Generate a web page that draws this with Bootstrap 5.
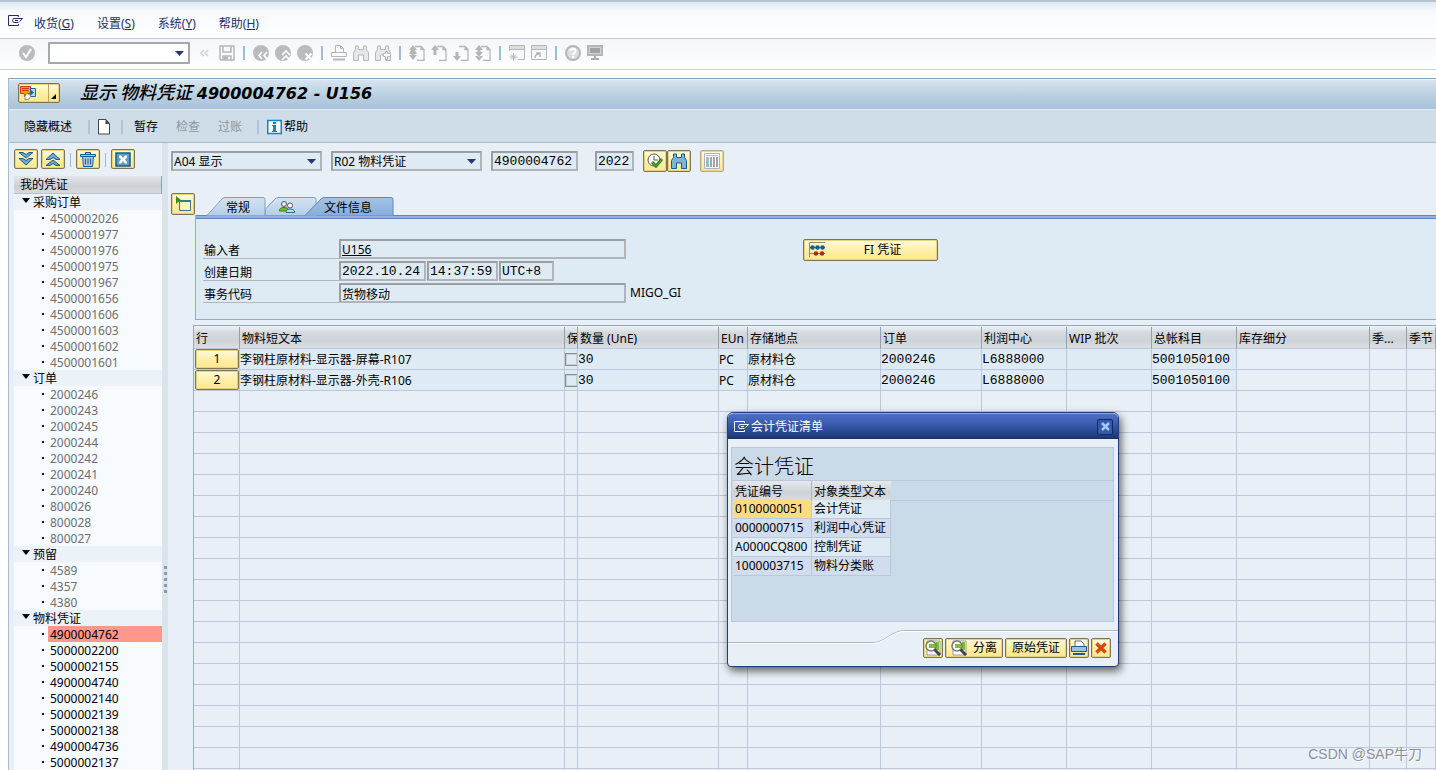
<!DOCTYPE html>
<html lang="zh-CN">
<head>
<meta charset="utf-8">
<meta name="viewport" content="width=device-width, initial-scale=1">
<title>显示 物料凭证 4900004762 - U156</title>
<link href="https://cdn.jsdelivr.net/npm/bootstrap@5.3.0/dist/css/bootstrap.min.css" rel="stylesheet">
<style>
:root{--ui:"Noto Sans","Noto Sans CJK SC",sans-serif;--line:#bcc8d9;--frame:#8facc8}
body{font-family:var(--ui);font-size:12px;line-height:16px;color:#000;background:#fff;height:100vh;overflow:hidden}
a{color:inherit;text-decoration:none}
svg{display:block;flex:none}
button{font:inherit;color:inherit;background:none;border:0;padding:0}
.menubar{height:39px;flex:none;border-top:2px solid #b5c3d3;border-bottom:1px solid #c3ccd8;background:linear-gradient(#dfe8f2,#f7f9fc 25%,#fff);color:#1d2f66;padding:6px 8px 0}
.menubar .menus{gap:23px;margin-left:11px}
.menubar svg{margin-top:7px}
.stdbar{height:31px;flex:none;background:linear-gradient(#f3f6fa,#fff);border-bottom:1px solid #c9d0d8;padding-left:19px;gap:6px;color:#b4b6b8;padding-bottom:2px}
.stdbar .sep,.appbar .sep{width:2px;height:14px;background:#9dbcdb;margin:0 2px}
.cmdbox{width:142px;height:22px;border:2px solid #a4a8ac;margin-left:7px;border-radius:1px}
.expander{width:17px}
.drop{appearance:none;font:inherit;background:#fff url("data:image/svg+xml,%3Csvg xmlns='http://www.w3.org/2000/svg' width='9' height='5'%3E%3Cpath d='M0 0h9L4.500 5z' fill='%23203a70'/%3E%3C/svg%3E") no-repeat right 4px center}
.workarea{margin:8px 0 0 8px;border-top:1px solid #87a3bc;border-left:1px solid #a8bccd;background:#e8eff6}
.titlebar{height:30px;flex:none;background:linear-gradient(#d6e4f0,#b9cfdf 55%,#a9c2dc);border-top:1px solid #edf4f9;padding-left:9px;padding-bottom:4px}
.titlebar h1{font-size:18px;font-style:italic;font-weight:700;line-height:22px;margin:0 0 0 20px}
.titlebar h1 span{font-family:"DejaVu Sans",sans-serif;font-size:16px}
.titlebar h1 .cjk{font-family:"Noto Sans CJK SC",sans-serif;font-size:18px;font-weight:500}
.appbar{height:34px;flex:none;background:#cfdde8;border-bottom:1px solid #a4bacb;border-top:1px solid #e4edf3;padding:1px 0 0 15px}
.appbar .sep{margin:0;background:#aac6df}
.appbar button:disabled{color:#8b969f}
.appbar .newdoc{margin:0 11px 0 8px}
.appbar .cmd{margin-right:18px}
.appbar .first{margin-left:11px}
.appbar .final{margin-right:15px}
.ybtn{display:flex;align-items:center;justify-content:center;border:1px solid #7d7355;border-radius:2px;background:linear-gradient(#fffbe0,#ffefa8 50%,#fbe890);box-shadow:inset 0 0 0 1px #e9d27c;height:20px;width:24px}
.ybtn.b22{height:22px}
.ybtn.svcbtn{width:42px}
.ybtn.fibtn{width:135px}
.ybtn.w20{width:20px}
.ybtn.w58{width:58px;gap:6px}
.ybtn.w62{width:62px}
.ybtn:disabled{border-color:#a69d80;opacity:.85}
.side{width:153px;flex:none;padding:6px 0 0 5px;height:100%}
.side .tools{height:27px;gap:3px}
.side .tools i{width:1px;height:14px;background:#a9b3bd;margin:0 2px}
.treehead{height:18px;padding:1px 0 0 6px;background:linear-gradient(#e3e6e9,#ccd0d5 60%,#d6d9dd);border-right:1px solid #8fa0b0;border-bottom:1px solid #b9c0c8}
.tree,.tree ul{list-style:none;margin:0;padding:0}
.tree>li{background:#ecf2fa}
.tree .grp{display:flex;align-items:center;padding-left:8px;height:16px;gap:3px;padding-top:2px}
.tree .grp::before{content:"";border:4px solid transparent;border-top:5px solid #000;border-bottom:0;margin-bottom:5px;width:0}
.tree ul li{background:#f7fbff;height:16px;display:flex;align-items:center;padding-left:28px;color:#6e6e6e}
.tree ul li::before{content:"";width:2px;height:2px;background:#000;margin-right:4px}
.tree ul li a{flex:1;height:16px;line-height:18px;padding-left:2px}
.tree ul.recent li{color:#000}
.tree ul li a.hit{background:#ff978b}
.splitter{width:6px;flex:none;background:#dae5eb}
.splitter i{width:3px;height:3px;background:#8d99a8;margin-bottom:3px}
.splitter div{margin-top:248px}
.field{height:20px;border:2px solid #b0b5b9;border-top-color:#9a9fa3;border-left-color:#9a9fa3;background-color:#deebf5;padding:1px 1px 0;border-radius:1px;color:#000;font-size:12px;font-family:inherit;outline:0}
.mono{font-family:"Liberation Mono","Noto Sans CJK SC",monospace;font-size:13px}
.w-sel{width:151px}.w-num{width:87px}.w-year{width:39px}.w-long{width:287px}.w-time{width:71px}.w-zone{width:55px}
.main{flex:1;min-width:0;padding:7px 0 0 3px}
.selrow{height:22px;gap:9px}
.tabrow{height:43px;gap:12px}
.tabs{position:relative;height:18px}
.tabs svg.shape{position:absolute;left:0;top:0}
.tabs button{position:relative;height:18px;padding-top:3px}
.tabs .t-gen{width:58px;padding-left:4px}
.tabs .t-part{width:44px}
.tabs .t-doc{width:78px}
.infopanel{background:#deebf5;border:1px solid var(--frame);border-right:0;border-top:0;height:105px;margin-left:24px}
.infopanel .rail{height:4px;background:#8fb2dc;border-top:1px solid #5d88ba;border-bottom:1px solid #5d88ba}
.infopanel .formarea{padding:20px 0 0 7px}
.formcol{width:600px}
.formrow{height:20px;margin-bottom:2px}
.formrow label{width:136px;height:20px;border-bottom:1px solid #b3b7ba;padding:4px 0 0 1px;line-height:15px}
.fibtn span{width:108px}
.gridwrap{margin:5px 0 0 22px;border-top:1px solid var(--frame);border-left:1px solid var(--frame);padding-top:1px;overflow:hidden;flex:1}
.items{table-layout:fixed;border-collapse:separate;border-spacing:0;width:100%}
.items th{font-weight:400;height:22px;padding:2px 1px 0 2px;background:linear-gradient(#eceff2,#d6dade 25%,#ced3d9 65%,#dcdfe2);border-right:1px solid #8fa0b0;border-bottom:1px solid var(--line);overflow:hidden;white-space:nowrap}
.items td{height:21px;padding:1px 0 0;border-right:1px solid var(--line);border-bottom:1px solid var(--line);overflow:hidden;white-space:nowrap}
.items td:first-child{padding:0 0 0 1px}
.items .filled td:nth-child(-n+10){background:#deebf5}
.items .ybtn{width:44px;height:20px}
.items input{appearance:none;display:block;width:13px;height:13px;border:1px solid #8c8f92;box-shadow:inset 0 0 0 1px #c6cfd6;margin:0}
.dlg{position:absolute;left:727px;top:412px;width:392px;border:1px solid #213c78;border-radius:6px 6px 4px 4px;background:#e8eff6;box-shadow:2px 4px 8px rgba(0,0,0,.6)}
.dlg header{height:26px;border-radius:5px 5px 0 0;background:linear-gradient(#4c70c6,#3a5db0 40%,#1d3777);border-top:1px solid #88a5e2;border-bottom:1px solid #17305f;color:#fff;padding:1px 5px 0 6px;gap:2px}
.dlg .closer{width:16px;height:16px;border:1px solid #122b66;border-radius:2px;background:#3559ac;display:flex;align-items:center;justify-content:center}
.listbox{margin:8px 4px 0 3px;background:#cbdae8;border:1px solid #b9c6d6;height:175px}
.listbox h2{font-family:"Noto Sans CJK SC",sans-serif;font-size:20px;font-weight:300;line-height:32px;height:33px;margin:0;padding:2px 0 0 2px;border-bottom:1px solid var(--line)}
.headband{border-bottom:1px solid var(--line);height:20px}
.hits{border-collapse:separate;border-spacing:0;table-layout:fixed;width:158px;margin-left:1px}
.hits col{width:79px}
.hits th{font-weight:400;height:19px;padding:3px 0 0 2px;line-height:16px;background:linear-gradient(#e6e9ec,#ced2d7 60%,#d9dcdf);border-right:1px solid #aab4bf}
.hits td{height:19px;padding:0 0 0 2px;line-height:16px;border-right:1px solid var(--line);border-bottom:1px solid var(--line);background:#deebf5;white-space:nowrap}
.hits tr:nth-child(even) td{background:#d1dcee}
.hits td.cur{background:#fcdc80}
.hits th:last-child{border-right:0}
.dlg footer{padding:0 7px 8px 0;gap:2px;margin-top:-6px}
.mark-csdn{position:absolute;right:14px;bottom:7px;font-family:"Liberation Sans","Noto Sans CJK SC",sans-serif;font-size:14px;line-height:18px;color:#8b9095;text-shadow:1px 1px 0 #fff}
</style>
</head>
<body class="d-flex flex-column position-relative">

<svg width="0" height="0" class="position-absolute" aria-hidden="true"><defs>
<g id="i-exit" fill="none" stroke="currentColor"><path d="M10.500 2V.5H.5v10h10V9"/><path d="M10 3.500H5.500q-2 2 0 4h5M7 5.500h3M10 3.500h4.500l-3 3"/></g>
<g id="i-page" fill="none" stroke="currentColor" stroke-width="1.300"><path d="M6 1.500h6l3 3v11H8M12 1.500v3h3"/></g>
<g id="i-bino"><path d="M2.500 1h3v3.500h5V1h3v3.500l2 3v8h-5V10h-5v5.500h-5v-8l2-3z"/></g>
<g id="i-find"><path d="M2 1h13v14H2z" fill="#fff" stroke="#999"/><path d="M11 2h3v8h-3z" fill="#7cc22c"/><circle cx="6" cy="6" r="5" fill="#fff" stroke="#777" stroke-width="1.500"/><path d="M4 4h6v4H4z" fill="#7cc22c"/><path d="M9.500 9.500l5.500 5.500" stroke="#444" stroke-width="3"/></g>
</defs></svg>

<nav class="menubar d-flex align-items-start" aria-label="菜单">
  <svg width="15" height="12"><use href="#i-exit"/></svg>
  <div class="menus d-flex mt-2">
    <a href="#">收货(<u>G</u>)</a><a href="#">设置(<u>S</u>)</a><a href="#">系统(<u>Y</u>)</a><a href="#">帮助(<u>H</u>)</a>
  </div>
</nav>

<div class="stdbar d-flex align-items-center">
  <button aria-label="确认"><svg width="16" height="16"><circle cx="8" cy="8" r="8" fill="#b9bbbd"/><path d="M4 8l3 4 5-8" fill="none" stroke="#fff" stroke-width="2"/></svg></button>
  <select class="cmdbox drop" aria-label="命令"><option></option></select>
  <button class="expander" aria-label="隐藏"><svg width="17" height="16" fill="none" stroke="#cfd1d3" stroke-width="1.500"><path d="M8 5L5 8l3 3M12 5L9 8l3 3"/></svg></button>
  <button aria-label="保存"><svg width="16" height="16" fill="none" stroke="currentColor" stroke-width="1.500"><path d="M1 1h14v14H2l-1-1zM4 1v6h8V1M4 15v-4h8v4"/><path d="M5 13h4" stroke-width="3"/></svg></button>
  <span class="sep"></span>
  <button aria-label="返回"><svg width="16" height="16"><circle cx="8" cy="8" r="8" fill="#b9bbbd"/><path d="M9 7l-3 3.500L9 14M14 7l-3 3.500 3 3.500" fill="none" stroke="#fff" stroke-width="1.700"/></svg></button>
  <button aria-label="退出"><svg width="16" height="16"><circle cx="8" cy="8" r="8" fill="#b9bbbd"/><path d="M7 10l4-4 4 4M7 15l4-4 4 4" fill="none" stroke="#fff" stroke-width="1.700"/></svg></button>
  <button aria-label="取消"><svg width="16" height="16"><circle cx="8" cy="8" r="8" fill="#b9bbbd"/><path d="M8.500 8.500l6 6M14.500 8.500l-6 6" fill="none" stroke="#fff" stroke-width="2"/></svg></button>
  <span class="sep"></span>
  <button aria-label="打印"><svg width="16" height="16" fill="none" stroke="currentColor"><path d="M4.500 7V.5h5l3 3V7M9.500.5v3h3M.5 7.500h15v4H.5z"/><path d="M2 14.500h12" stroke-width="2"/></svg></button>
  <button aria-label="查找"><svg width="16" height="16" fill="#e6e7e8" stroke="currentColor"><use href="#i-bino"/></svg></button>
  <button aria-label="查找下一个"><svg width="16" height="16" fill="#e6e7e8" stroke="currentColor"><use href="#i-bino"/><path d="M10.500 6.500h2v2h3v3h-3v3h-2v-3h-2v-3h2z" fill="#fff"/></svg></button>
  <span class="sep"></span>
  <button aria-label="首页"><svg width="16" height="16"><use href="#i-page"/><path d="M4 0l4 5H6l2 4H5.500v1H8l-4 5-4-5h2.500V9H0l2-4H0z" fill="currentColor"/></svg></button>
  <button aria-label="上页"><svg width="16" height="16"><use href="#i-page"/><path d="M4 0l4 5H5.500v5h-3V5H0z" fill="currentColor"/></svg></button>
  <button aria-label="下页"><svg width="16" height="16"><use href="#i-page"/><path d="M4 16l4-5H5.500V7h-3v4H0z" fill="currentColor"/></svg></button>
  <button aria-label="末页"><svg width="16" height="16"><use href="#i-page"/><path d="M4 0l4 5H5.500v2H8l-4 5-4-5h2.500V5H0zM4 16l4-5H0z" fill="currentColor"/></svg></button>
  <span class="sep"></span>
  <button aria-label="新会话"><svg width="16" height="16" fill="none" stroke="currentColor"><path d="M.5 6V.5h15v14H9M.5 4.500h15"/><path d="M1 2.500h14" stroke="#dcdddf" stroke-width="3"/><path d="M4.500 8v8M.5 12h8M2 9.500l5 5M7 9.500l-5 5"/></svg></button>
  <button aria-label="快捷方式"><svg width="16" height="16" fill="none" stroke="currentColor"><path d="M.5.5h15v14H.5zM.5 4.500h15"/><path d="M1 2.500h14" stroke="#dcdddf" stroke-width="3"/><path d="M4 13c0-3 1-4 4-4M5 8h4v4" stroke-width="1.500"/></svg></button>
  <span class="sep"></span>
  <button aria-label="帮助"><svg width="16" height="16"><circle cx="8" cy="8" r="7" fill="#dcdddf" stroke="#b4b6b8" stroke-width="2"/><path d="M5.500 6c0-3 5-3 5 0 0 2-2.500 2-2.500 4M8 11v2" fill="none" stroke="#fff" stroke-width="2"/></svg></button>
  <button aria-label="布局"><svg width="16" height="16"><path d="M1 1h14v9H1z" fill="#d2d3d5" stroke="#b4b6b8" stroke-width="2"/><path d="M3 3h10v5H3z" fill="#a0a2a4"/><path d="M7 11h2v2H7zM4 13h8v2H4z" fill="#a9abad"/></svg></button>
</div>

<div class="workarea flex-grow-1 d-flex flex-column overflow-hidden">
  <div class="titlebar d-flex align-items-center">
    <button class="ybtn svcbtn justify-content-between" aria-label="对象服务"><svg width="18" height="16"><path d="M1.500 1.500h10v7H8l-2 3-1-3H1.500z" fill="#ff9d0a" stroke="#c83c10"/><path d="M3 3.500h7M3 5.500h7" stroke="#c83c10"/><path d="M11.500 3.500h5v8h-5z" fill="#b8d8ee" stroke="#1a6696"/><path d="M12 5l3 2.500-3 2.500z" fill="#1a6696"/><path d="M6 11l2-3 4 3-2 3-4 1z" fill="#fff" stroke="#666" stroke-width=".7"/></svg><svg width="11" height="18"><path d="M.5 0v18" stroke="#b9a560"/><path d="M8 10v5H3z"/></svg></button>
    <h1><span class="cjk">显示 物料凭证</span> <span>4900004762 - U156</span></h1>
  </div>
  <div class="appbar d-flex align-items-center">
    <button>隐藏概述</button><span class="sep ms-3"></span>
    <button class="newdoc" aria-label="新建"><svg width="12" height="16"><path d="M.5.500H8l3.500 4v10.500H.5z" fill="#fff" stroke="#444"/><path d="M7.500 0v5H12z" fill="#444"/></svg></button><span class="sep"></span>
    <button class="cmd first">暂存</button><button class="cmd" disabled>检查</button><button class="final" disabled>过账</button><span class="sep me-2"></span>
    <button class="d-flex align-items-center"><svg width="17" height="16"><path d="M.75 1.500h13.500v13H.75z" fill="#fff" stroke="#1383c6" stroke-width="1.500"/><path d="M6 3h3v2H6zM5 6h4v6h1v1H5v-1h1V7H5z" fill="#1383c6"/></svg>帮助</button>
  </div>

  <div class="d-flex flex-grow-1 overflow-hidden">
    <aside class="side">
      <div class="tools d-flex align-items-start">
        <button class="ybtn" aria-label="全部展开"><svg width="16" height="16" fill="#6fa8d0" stroke="#175c8f"><path d="M1 1.500h4l3 2 3-2h4L8 7zM1 7.500h4l3 2 3-2h4L8 14z"/></svg></button>
        <button class="ybtn" aria-label="全部折叠"><svg width="16" height="16" fill="#6fa8d0" stroke="#175c8f"><path d="M1 8.500h4l3-2 3 2h4L8 2zM1 14.500h4l3-2 3 2h4L8 9z"/></svg></button>
        <i class="align-self-start mt-1"></i>
        <button class="ybtn" aria-label="删除"><svg width="18" height="16" fill="#a9cbe4" stroke="#175c8f"><path d="M3.500 5.500h11l-1 10h-9zM1.500 3.500h15v2h-15zM6.500 3.500v-2h5v2"/><path d="M6.500 7.500v6M9 7.500v6M11.500 7.500v6"/></svg></button>
        <i class="align-self-start mt-1"></i>
        <button class="ybtn" aria-label="关闭"><svg width="16" height="15"><path d="M1 1h14v13H1z" fill="#5f9cc8" stroke="#175c8f" stroke-width="1.500"/><path d="M4 3.500h2l2 2.500 2-2.500h2v2L10 7.500l2 2.500v1.500h-2L8 9l-2 2.500H4V10l2-2.500-2-2z" fill="#fff"/></svg></button>
      </div>
      <div class="treehead">我的凭证</div>
      <ul class="tree" id="tree"></ul>
    </aside>
    <div class="splitter d-flex flex-column align-items-center justify-content-center"><div><i class="d-block"></i><i class="d-block"></i><i class="d-block"></i><i class="d-block"></i><i class="d-block"></i></div></div>

    <main class="main d-flex flex-column">
      <div class="selrow d-flex align-items-center">
        <select class="field drop w-sel" aria-label="操作"><option>A04 显示</option></select>
        <select class="field drop w-sel" aria-label="参考凭证"><option>R02 物料凭证</option></select>
        <input class="field mono w-num" value="4900004762" aria-label="凭证号" readonly>
        <input class="field mono w-year ms-2" value="2022" aria-label="年度" readonly>
        <div class="d-flex">
        <button class="ybtn b22" aria-label="执行"><svg width="17" height="16"><circle cx="7" cy="7" r="6" fill="#fff" stroke="#555"/><path d="M7 3v4h4" fill="none" stroke="#555"/><path d="M5 9l4 4 6-7" fill="none" stroke="#2c7c14" stroke-width="3"/><path d="M5 9l4 4 6-7" fill="none" stroke="#6cc03a"/></svg></button>
        <button class="ybtn b22" aria-label="查找凭证"><svg width="16" height="16" fill="#7fb4da" stroke="#175c8f"><use href="#i-bino"/></svg></button>
        </div>
        <button class="ybtn b22" disabled aria-label="列"><svg width="16" height="16"><path d="M.5.500h15v15H.5z" fill="#fff" stroke="#aaa"/><path d="M2 2.500h12" stroke="#bbb"/><path d="M2 4h3v10H2z" fill="#8eb4cc"/><path d="M6 4h2v10H6zM9 4h2v10H9zM12 4h2v10h-2z" fill="#999"/></svg></button>
      </div>

      <div class="tabrow d-flex align-items-end">
        <button class="ybtn b22" aria-label="显示明细"><svg width="16" height="16"><path d="M4.500 4.500h11v10h-11z" fill="#fff3b8" stroke="#3d7598"/><path d="M4 5h12" stroke="#3d7598" stroke-width="2"/><path d="M1 0l5 4-5 4z" fill="#3c8f1c"/></svg></button>
        <div class="tabs d-flex">
          <svg class="shape" width="188" height="19"><defs><linearGradient id="tg" x2="0" y2="1"><stop stop-color="#d3e2f0"/><stop offset="1" stop-color="#b4cfe8"/></linearGradient><linearGradient id="ta" x2="0" y2="1"><stop stop-color="#a3c3e4"/><stop offset="1" stop-color="#87addb"/></linearGradient></defs><path d="M0 18.500L15 2Q16.500.5 18 .5H56q2 0 2 2v16" fill="url(#tg)" stroke="#7fa3c6"/><path d="M58.500 18.500V12L68 2Q69.500.5 71 .5h36q2 0 2 2v16z" fill="url(#tg)" stroke="#7fa3c6"/><path d="M98 18.500L114 2q1.500-1.500 3-1.500h67q2 0 2 2v16" fill="url(#ta)" stroke="#5d88ba"/></svg>
          <button class="t-gen">常规</button>
          <button class="t-part d-flex justify-content-center" aria-label="合作伙伴"><svg width="16" height="14"><circle cx="5" cy="4" r="2.500" fill="#eee" stroke="#555"/><path d="M.5 11V9.500Q1 7.500 5 7.500t4 2V11z" fill="#74c02c" stroke="#3f7f18"/><circle cx="11" cy="5.500" r="2.500" fill="#fff" stroke="#555"/><path d="M7 12.500V11q.5-2 4-2t4.500 2v1.500z" fill="#bfe0f2" stroke="#1d6e9e"/></svg></button>
          <button class="t-doc" aria-current="page">文件信息</button>
        </div>
      </div>

      <div class="infopanel">
        <div class="rail"></div>
        <div class="formarea d-flex">
          <div class="formcol flex-shrink-0">
            <div class="formrow d-flex"><label for="f1">输入者</label><input id="f1" class="field w-long text-decoration-underline" value="U156" readonly></div>
            <div class="formrow d-flex"><label for="f2">创建日期</label><input id="f2" class="field mono w-num" value="2022.10.24" readonly><input class="field mono w-time" style="margin:0 1px" value="14:37:59" aria-label="时间" readonly><input class="field mono w-zone" value="UTC+8" aria-label="时区" readonly></div>
            <div class="formrow d-flex align-items-center"><label for="f3">事务代码</label><input id="f3" class="field w-long" value="货物移动" readonly><span class="ps-1">MIGO_GI</span></div>
          </div>
          <button class="ybtn b22 fibtn"><svg width="16" height="16"><path d="M.5 15V.5H16M0 5.500h16M0 11.500h16" fill="none" stroke="#888"/><g fill="#0d5f94"><circle cx="3.500" cy="5.500" r="2.300"/><circle cx="8.500" cy="5.500" r="2.300"/><circle cx="13.500" cy="5.500" r="2.300"/></g><g fill="#b3281a"><circle cx="7" cy="11.500" r="2.300"/><circle cx="13" cy="11.500" r="2.300"/></g></svg><span class="text-center ps-2">FI 凭证</span></button>
        </div>
      </div>

      <div class="gridwrap">
        <table class="items">
          <colgroup><col style="width:46px"><col style="width:325px"><col style="width:13px"><col style="width:141px"><col style="width:29px"><col style="width:133px"><col style="width:101px"><col style="width:85px"><col style="width:85px"><col style="width:85px"><col style="width:133px"><col style="width:37px"><col></colgroup>
          <thead><tr><th>行</th><th>物料短文本</th><th>保</th><th>数量 (UnE)</th><th>EUn</th><th>存储地点</th><th>订单</th><th>利润中心</th><th>WIP 批次</th><th>总帐科目</th><th>库存细分</th><th>季...</th><th>季节</th></tr></thead>
          <tbody id="rows">
            <tr class="filled"><td><button class="ybtn">1</button></td><td>李钢柱原材料-显示器-屏幕-R107</td><td><input type="checkbox" aria-label="行 1"></td><td class="mono">30</td><td>PC</td><td>原材料仓</td><td class="mono">2000246</td><td class="mono">L6888000</td><td></td><td class="mono">5001050100</td><td></td><td></td><td></td></tr>
            <tr class="filled"><td><button class="ybtn">2</button></td><td>李钢柱原材料-显示器-外壳-R106</td><td><input type="checkbox" aria-label="行 2"></td><td class="mono">30</td><td>PC</td><td>原材料仓</td><td class="mono">2000246</td><td class="mono">L6888000</td><td></td><td class="mono">5001050100</td><td></td><td></td><td></td></tr>
          </tbody>
        </table>
      </div>
    </main>
  </div>
</div>

<section class="dlg" role="dialog" aria-labelledby="dt">
  <header class="d-flex align-items-center"><svg width="15" height="12"><use href="#i-exit"/></svg><span id="dt">会计凭证清单</span><button class="closer ms-auto" aria-label="关闭"><svg width="9" height="9"><path d="M1 1l7 7M8 1L1 8" stroke="#a9c6ff" stroke-width="2.500"/></svg></button></header>
  <div class="listbox">
    <h2>会计凭证</h2>
    <div class="headband">
    <table class="hits"><colgroup><col><col></colgroup>
      <thead><tr><th>凭证编号</th><th>对象类型文本</th></tr></thead>
      <tbody><tr><td class="cur">0100000051</td><td>会计凭证</td></tr><tr><td>0000000715</td><td>利润中心凭证</td></tr><tr><td>A0000CQ800</td><td>控制凭证</td></tr><tr><td>1000003715</td><td>物料分类账</td></tr></tbody>
    </table></div>
  </div>
  <svg class="mt-2" width="100%" height="14"><path d="M0 12.500h145c12 0 18-12 32-12H500" fill="none" stroke="#a9b9cc"/><path d="M0 13.500h145c12 0 18-12 32-12H500" fill="none" stroke="#fff"/></svg>
  <footer class="d-flex justify-content-end">
    <button class="ybtn w20" aria-label="查找"><svg width="16" height="16"><use href="#i-find"/></svg></button>
    <button class="ybtn w58"><svg width="16" height="16"><use href="#i-find"/></svg>分离</button>
    <button class="ybtn w62">原始凭证</button>
    <button class="ybtn w20" aria-label="打印"><svg width="16" height="16"><path d="M4 7V1h6l3 3v3" fill="#fff" stroke="#666"/><path d="M.5 6.500h15v5H.5z" fill="#9cc4e0" stroke="#175c8f"/><path d="M2 14h12" stroke="#175c8f" stroke-width="2"/></svg></button>
    <button class="ybtn w20" aria-label="取消"><svg width="12" height="12"><path d="M1.500 1.500l9 9M10.500 1.500l-9 9" stroke="#d9480f" stroke-width="3.500"/></svg></button>
  </footer>
</section>

<div class="mark-csdn">CSDN @SAP牛刀</div>

<script>
const groups=[
 ["采购订单","4500002026 4500001977 4500001976 4500001975 4500001967 4500001656 4500001606 4500001603 4500001602 4500001601"],
 ["订单","2000246 2000243 2000245 2000244 2000242 2000241 2000240 800026 800028 800027"],
 ["预留","4589 4357 4380"],
 ["物料凭证","4900004762 5000002200 5000002155 4900004740 5000002140 5000002139 5000002138 4900004736 5000002137",true]];
document.getElementById("tree").innerHTML=groups.map(([name,ids,recent])=>
 `<li><div class="grp">${name}</div><ul class="${recent?"recent":""}">`+ids.split(" ").map(n=>`<li><a href="#"${n==="4900004762"?' class="hit"':""}>${n}</a></li>`).join("")+"</ul></li>").join("");
document.getElementById("rows").insertAdjacentHTML("beforeend",("<tr>"+"<td></td>".repeat(13)+"</tr>").repeat(19));
</script>
<script src="https://cdn.jsdelivr.net/npm/bootstrap@5.3.0/dist/js/bootstrap.bundle.min.js"></script>
</body>
</html>
